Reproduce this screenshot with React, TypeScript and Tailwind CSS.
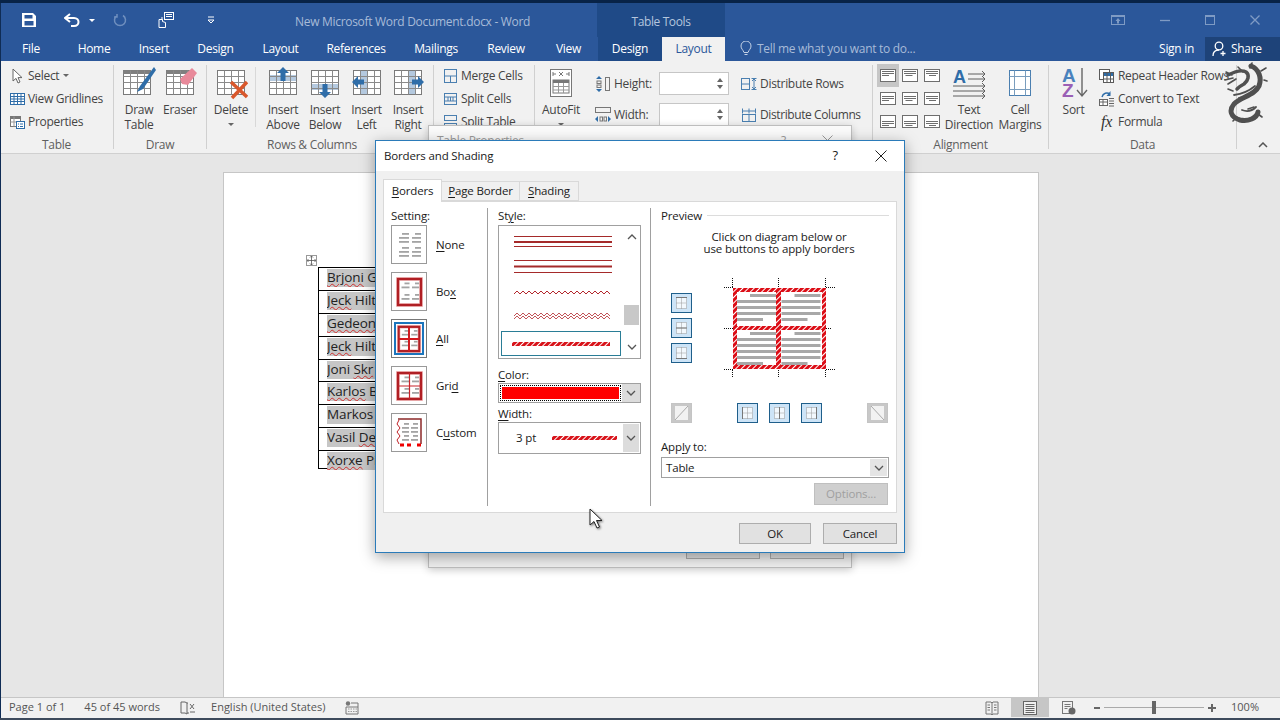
import React from 'react';

const ribbonBlue = '#2f6da8';

function TableGlyph({ band, header }: { band?: React.ReactNode; header?: boolean }) {
  return (
    <>
      <rect x="1.5" y="4.5" width="27" height="24" fill="#fff" stroke="#7a7a7a" />
      {band}
      {header && <rect x="1" y="4" width="28" height="4" fill="#7f7f7f" />}
      <path d="M1.5 10.5h27M1.5 16.5h27M1.5 22.5h27M8.5 4.5v24M15.5 4.5v24M22.5 4.5v24" stroke="#8a8a8a" fill="none" />
    </>
  );
}

function Big({ children, shift }: { children: React.ReactNode; shift?: boolean }) {
  return (
    <svg width="34" height="34" viewBox={shift ? '-2 0 34 34' : '0 0 34 34'} className="block">
      {children}
    </svg>
  );
}

function DrawTableIcon() {
  return (
    <Big>
      <TableGlyph header />
      <path d="M32 1 18 20l-3 6 6-3L34 4z" fill={ribbonBlue} />
    </Big>
  );
}

function EraserIcon() {
  return (
    <Big shift>
      <TableGlyph header />
      <path d="M27 2l5 5-9 12-6-1-2-5z" fill="#e8899a" />
    </Big>
  );
}

function DeleteIcon() {
  return (
    <Big shift>
      <TableGlyph />
      <path d="M15 16l16 15M31 16 16 32" stroke="#d9572b" strokeWidth="3.4" fill="none" />
    </Big>
  );
}

function InsertAboveIcon() {
  return (
    <Big shift>
      <TableGlyph band={<rect x="2" y="9" width="26" height="6" fill="#b4c9df" />} />
      <path d="M15 1l6 6h-3.500v8h-5V7H9z" fill={ribbonBlue} />
    </Big>
  );
}

function InsertBelowIcon() {
  return (
    <Big shift>
      <TableGlyph band={<rect x="2" y="18" width="26" height="6" fill="#b4c9df" />} />
      <path d="M15 32l6-6h-3.500v-8h-5v8H9z" fill={ribbonBlue} />
    </Big>
  );
}

function InsertLeftIcon() {
  return (
    <Big shift>
      <TableGlyph band={<rect x="9" y="5" width="7" height="23" fill="#b4c9df" />} />
      <path d="M0 16l6-6v3.500h6v5H6V22z" fill={ribbonBlue} />
    </Big>
  );
}

function InsertRightIcon() {
  return (
    <Big shift>
      <TableGlyph band={<rect x="15" y="5" width="7" height="23" fill="#b4c9df" />} />
      <path d="M31 16l-6-6v3.500h-6v5h6V22z" fill={ribbonBlue} />
    </Big>
  );
}

function Small({ children, w = 16 }: { children: React.ReactNode; w?: number }) {
  return (
    <svg width={w} height="16" viewBox={`0 0 ${w} 16`} className="block shrink-0">
      {children}
    </svg>
  );
}

const smallIcons: Record<string, React.ReactNode> = {
  select: (
    <path d="M4 1v12l3-2.600L9 15l2-1-2-4.400h4z" fill="#fff" stroke="#666" strokeWidth="1" />
  ),
  gridlines: (
    <g fill="none" stroke={ribbonBlue}>
      <rect x="1.500" y="2.500" width="14" height="11" fill="#fff" />
      <path d="M1.500 5.500h14M1.500 8h14M1.500 10.500h14M5 2.500v11M8.500 2.500v11M12 2.500v11" />
    </g>
  ),
  properties: (
    <g fill="none">
      <rect x="1.500" y="2.500" width="10" height="10" stroke="#777" fill="#fff" />
      <rect x="1" y="2" width="11" height="3" fill="#777" />
      <path d="M5 2.500v10M1.500 8h10" stroke="#999" />
      <rect x="7.500" y="7.500" width="8" height="7" stroke={ribbonBlue} fill="#fff" />
      <path d="M9 10h1M9 12.500h1M11 10h3M11 12.500h3" stroke={ribbonBlue} />
    </g>
  ),
  merge: (
    <g fill="none" stroke="#4a7fb0">
      <rect x="2.500" y="1.500" width="12" height="13" />
      <path d="M2.500 8h12M8.500 8v6.500" />
    </g>
  ),
  split: (
    <g fill="none" stroke="#4a7fb0">
      <rect x="2.500" y="2.500" width="12" height="11" />
      <path d="M2.500 6h12M6 6v4M8.500 6v4M11 6v4M2.500 10h12" />
    </g>
  ),
  splitTable: (
    <g fill="none" stroke="#4a7fb0">
      <rect x="2.500" y="1.500" width="12" height="5" />
      <rect x="2.500" y="9.500" width="12" height="5" />
    </g>
  ),
  repeat: (
    <g fill="none" stroke="#5a5a5a">
      <rect x="1.500" y="1.500" width="10" height="10" fill="#fff" />
      <rect x="5.500" y="4.500" width="10" height="10" fill="#fff" />
      <rect x="6" y="5" width="9" height="3" fill={ribbonBlue} stroke="none" />
      <path d="M9 5v9M12.500 5v9M5.500 11h10" />
    </g>
  ),
  convert: (
    <g fill="none">
      <rect x="1.500" y="8.500" width="8" height="6" stroke="#666" fill="#fff" />
      <path d="M1.500 11h8M5 8.500v6" stroke="#666" />
      <path d="M4 6c1-4 5-5 8-3" stroke={ribbonBlue} strokeWidth="1.400" />
      <path d="M12.500 0v5h-4z" fill={ribbonBlue} />
      <path d="M11 7.500h5M11 10h5M11 12.500h5M11 15h5" stroke="#666" />
    </g>
  ),
};

function SmallRow({ icon, label, caret }: { icon: React.ReactNode; label: string; caret?: boolean }) {
  return (
    <div className="flex h-[23px] items-center gap-[3px] whitespace-nowrap">
      {icon}
      <span>{label}</span>
      {caret && <span className="ml-[1px] h-0 w-0 border-x-[3px] border-t-[3px] border-x-transparent border-t-[#666]" />}
    </div>
  );
}

function BigButton({ icon, lines, className, caret }: { icon: React.ReactNode; lines: string[]; className: string; caret?: boolean }) {
  return (
    <div className={`flex shrink-0 flex-col items-center ${className}`}>
      <div className="flex h-[38px] items-center justify-center">{icon}</div>
      <div className="flex flex-col items-center whitespace-nowrap leading-[15px]">
        {lines.map((l) => (
          <span key={l}>{l}</span>
        ))}
      </div>
      {caret && <span className="mt-[6px] h-0 w-0 border-x-[3px] border-t-[3px] border-x-transparent border-t-[#666]" />}
    </div>
  );
}

function Group({ label, className, labelClass = '', children }: { label?: string; className: string; labelClass?: string; children: React.ReactNode }) {
  return (
    <div className={`flex h-full shrink-0 flex-col ${className}`}>
      <div className="flex h-[75px] flex-1 pt-[3px]">{children}</div>
      <div className={`mb-[1px] flex h-[14px] items-center justify-center text-[#5f5f5f] ${labelClass}`}>{label}</div>
    </div>
  );
}

function Sep() {
  return <div className="my-[4px] w-px shrink-0 bg-[#d0d0d0]" />;
}

function AlignCell({ row, col, active }: { row: number; col: number; active?: boolean }) {
  const ys = [2.500, 4.500, 6.500][row];
  const x = [2, 3.500, 5][col];
  return (
    <div className={`flex h-[23px] w-[22px] items-center justify-center ${active ? 'bg-[#c6c6c6]' : ''}`}>
      <svg width="16" height="13" viewBox="0 0 16 13">
        <rect x="0.500" y="0.500" width="15" height="12" fill="#fff" stroke="#6e6e6e" />
        <path d={`M2 ${ys}h12M2 ${ys + 2}h12M${x} ${ys + 4}h${7}`} stroke="#6e6e6e" fill="none" />
      </svg>
    </div>
  );
}

function Spin({ label, icon }: { label: string; icon: React.ReactNode }) {
  return (
    <div className="flex h-[31px] items-center">
      <div className="w-[18px] shrink-0">{icon}</div>
      <span className="w-[46px] shrink-0 pl-[1px]">{label}</span>
      <div className="relative h-[23px] w-[70px] shrink-0 border border-[#c6c6c6] bg-white">
        <span className="absolute right-[5px] top-[5px] h-0 w-0 border-x-[3px] border-b-[4px] border-x-transparent border-b-[#666]" />
        <span className="absolute bottom-[5px] right-[5px] h-0 w-0 border-x-[3px] border-t-[4px] border-x-transparent border-t-[#666]" />
      </div>
    </div>
  );
}

function Ribbon() {
  const rows = [0, 1, 2];
  return (
    <div className="flex h-[92px] shrink-0 bg-[#f1f1f1] text-[12px] text-[#444]">
      <Group label="Table" className="w-[113px]">
        <div className="flex flex-col pl-[9px]">
          <SmallRow caret label="Select" icon={<Small>{smallIcons.select}</Small>} />
          <SmallRow label="View Gridlines" icon={<Small>{smallIcons.gridlines}</Small>} />
          <SmallRow label="Properties" icon={<Small>{smallIcons.properties}</Small>} />
        </div>
      </Group>
      <Sep />
      <Group label="Draw" className="w-[92px]">
        <BigButton className="ml-[5px] w-[40px]" icon={<DrawTableIcon />} lines={['Draw', 'Table']} />
        <BigButton className="w-[42px]" icon={<EraserIcon />} lines={['Eraser']} />
      </Group>
      <Sep />
      <Group label="Rows & Columns" labelClass="pr-[16px]" className="w-[226px]">
        <BigButton className="w-[48px]" icon={<DeleteIcon />} lines={['Delete']} caret />
        <div className="mt-[3px] h-[60px] w-px bg-[#d8d8d8]" />
        <div className="ml-[6px] flex">
          <BigButton className="w-[42px]" icon={<InsertAboveIcon />} lines={['Insert', 'Above']} />
          <BigButton className="w-[42px]" icon={<InsertBelowIcon />} lines={['Insert', 'Below']} />
          <BigButton className="w-[41px]" icon={<InsertLeftIcon />} lines={['Insert', 'Left']} />
          <BigButton className="w-[42px]" icon={<InsertRightIcon />} lines={['Insert', 'Right']} />
        </div>
      </Group>
      <Sep />
      <Group className="w-[100px]">
        <div className="flex flex-col pl-[8px]">
          <SmallRow label="Merge Cells" icon={<Small>{smallIcons.merge}</Small>} />
          <SmallRow label="Split Cells" icon={<Small>{smallIcons.split}</Small>} />
          <SmallRow label="Split Table" icon={<Small>{smallIcons.splitTable}</Small>} />
        </div>
      </Group>
      <Sep />
      <Group className="w-[337px]">
        <BigButton
          className="w-[52px]"
          caret
          icon={
            <svg width="24" height="30" viewBox="0 0 24 30">
              <rect x="1.500" y="1.500" width="21" height="27" fill="#fff" stroke="#777" />
              <path d="M4 6h3M17 6h3M10 4l4 4M14 4l-4 4M4 4v4M20 4v4" stroke="#777" fill="none" />
              <rect x="4" y="12" width="16" height="13" fill="#fff" stroke="#777" />
              <rect x="4" y="12" width="16" height="3" fill="#777" />
              <path d="M4 18.500h16M4 22h16M9.500 15v10M14.500 15v10" stroke="#999" />
            </svg>
          }
          lines={['AutoFit']}
        />
        <div className="ml-[8px] flex w-[134px] flex-col pt-[4px]">
          <Spin
            label="Height:"
            icon={
              <Small>
                <path d="M4 0l3 3H1zM4 16l3-3H1z" fill={ribbonBlue} />
                <rect x="2" y="5" width="4" height="2.500" fill="none" stroke="#777" />
                <rect x="2" y="9" width="4" height="2.500" fill="none" stroke="#777" />
                <rect x="10.500" y="1.500" width="4" height="13" fill="none" stroke="#777" />
              </Small>
            }
          />
          <Spin
            label="Width:"
            icon={
              <Small>
                <rect x="0.500" y="0.500" width="15" height="5" fill="none" stroke="#777" />
                <path d="M0 12l3-3v6zM16 12l-3-3v6z" fill={ribbonBlue} />
                <rect x="5" y="10" width="2.500" height="4" fill="none" stroke="#777" />
                <rect x="9" y="10" width="2.500" height="4" fill="none" stroke="#777" />
              </Small>
            }
          />
        </div>
        <div className="ml-[12px] flex flex-col pt-[4px]">
          <div className="flex h-[31px] items-center gap-[3px] whitespace-nowrap">
            <Small>
              <g fill="none" stroke="#4a7fb0">
                <rect x="0.500" y="2.500" width="8" height="11" />
                <path d="M0.500 8h8M13 2v12M10.500 2.500h5M10.500 13.500h5M11 5l2-2 2 2M11 11l2 2 2-2" />
              </g>
            </Small>
            <span>Distribute Rows</span>
          </div>
          <div className="flex h-[31px] items-center gap-[3px] whitespace-nowrap">
            <Small>
              <g fill="none" stroke="#4a7fb0">
                <rect x="1.500" y="7.500" width="13" height="7" />
                <path d="M8 7.500v7M1.500 4h13M1.500 1.500v5M8 1.500v5M14.500 1.500v5" />
              </g>
            </Small>
            <span className="tracking-[-0.4px]">Distribute Columns</span>
          </div>
        </div>
      </Group>
      <Sep />
      <Group label="Alignment" className="w-[175px]">
        <div className="ml-[4px] flex h-fit flex-col">
          {rows.map((r) => (
            <div key={r} className="flex">
              {rows.map((c) => (
                <AlignCell key={c} row={r} col={c} active={r === 0 && c === 0} />
              ))}
            </div>
          ))}
        </div>
        <BigButton
          className="w-[52px]"
          icon={
            <svg width="34" height="32" viewBox="0 0 34 32">
              <text x="1" y="16" fontSize="18" fontWeight="700" fill={ribbonBlue} fontFamily="Liberation Sans, sans-serif">A</text>
              <path d="M16 7h17M16 12h17M1 19h32M1 24h32M1 29h32M30 4l3 3-3 3M30 9l3 3-3 3M30 16l3 3-3 3M30 21l3 3-3 3M30 26l3 3-3 3" fill="none" stroke="#5e5e5e" />
            </svg>
          }
          lines={['Text', 'Direction']}
        />
        <BigButton
          className="w-[50px]"
          icon={
            <svg width="24" height="30" viewBox="0 0 24 30">
              <rect x="1.500" y="2.500" width="21" height="25" fill="#fff" stroke="#4a7fb0" />
              <path d="M6.500 2.500v25M17.500 2.500v25M1.500 8.500h21M1.500 21.500h21" fill="none" stroke="#7a9dbd" />
            </svg>
          }
          lines={['Cell', 'Margins']}
        />
      </Group>
      <Sep />
      <Group label="Data" className="w-[187px]">
        <BigButton
          className="w-[49px]"
          icon={
            <svg width="30" height="34" viewBox="0 0 30 34">
              <text x="3" y="16" fontSize="19" fontWeight="700" fill="#4a82bd" fontFamily="Liberation Sans, sans-serif">A</text>
              <text x="3" y="31" fontSize="19" fontWeight="700" fill="#9a5fb5" fontFamily="Liberation Sans, sans-serif">Z</text>
              <path d="M23 2v28M18 24l5 6 5-6" fill="none" stroke="#666" strokeWidth="1.400" />
            </svg>
          }
          lines={['Sort']}
        />
        <div className="flex flex-col">
          <SmallRow label="Repeat Header Rows" icon={<Small w={17}>{smallIcons.repeat}</Small>} />
          <SmallRow label="Convert to Text" icon={<Small w={17}>{smallIcons.convert}</Small>} />
          <div className="flex h-[23px] items-center gap-[3px]">
            <span className="w-[17px] text-center font-['Liberation_Serif',serif] text-[16px] italic leading-none text-[#333]">fx</span>
            <span>Formula</span>
          </div>
        </div>
      </Group>
      <Sep />
      <div className="flex flex-1 items-end justify-end pb-[5px] pr-[12px]">
        <svg width="10" height="6" viewBox="0 0 10 6">
          <path d="M1 5l4-4 4 4" fill="none" stroke="#555" strokeWidth="1.500" />
        </svg>
      </div>
    </div>
  );
}

const tabs = [
  ['Home', 'w-[62px]'],
  ['Insert', 'w-[58px]'],
  ['Design', 'w-[65px]'],
  ['Layout', 'w-[65px]'],
  ['References', 'w-[86px]'],
  ['Mailings', 'w-[74px]'],
  ['Review', 'w-[66px]'],
  ['View', 'w-[59px]'],
];

function TitleBar() {
  return (
    <div className="relative flex h-[34px] shrink-0 items-center bg-[#2b579a]">
      <svg width="16" height="16" viewBox="0 0 16 16" className="ml-[21px]">
        <path d="M1 1h11l3 3v11H1z" fill="#fff" />
        <rect x="3.500" y="3" width="8" height="3.500" fill="#2b579a" />
        <rect x="3.500" y="9" width="9" height="4.500" fill="#2b579a" />
      </svg>
      <svg width="16" height="14" viewBox="0 0 16 14" className="ml-[27px]">
        <path d="M6 1 1 5l5 4" fill="none" stroke="#fff" strokeWidth="2" />
        <path d="M2 5h8c6 0 6 8 0 8H7" fill="none" stroke="#fff" strokeWidth="2" />
      </svg>
      <span className="ml-[9px] h-0 w-0 border-x-[3px] border-t-[3px] border-x-transparent border-t-white" />
      <svg width="14" height="14" viewBox="0 0 14 14" className="ml-[18px]">
        <path d="M4 2.500a5.500 5.500 0 1 0 6 0M4 1v3H1" fill="none" stroke="#6f8fbe" strokeWidth="1.500" />
      </svg>
      <svg width="18" height="18" viewBox="0 0 18 18" className="ml-[30px]">
        <rect x="7.500" y="1.500" width="9" height="7" fill="none" stroke="#fff" />
        <path d="M9 3.500h6M9 5.500h6" stroke="#fff" />
        <path d="M5 6v3M2 8.500h3.500v2l3 1v5H2z" fill="none" stroke="#fff" />
      </svg>
      <svg width="8" height="8" viewBox="0 0 8 8" className="ml-[32px]">
        <path d="M1 1h6M1 4h6l-3 3z" fill="none" stroke="#fff" />
      </svg>
      <span className="absolute left-[295px] top-[11px] whitespace-nowrap text-[12px] leading-[16px] text-[#a8bbd8]">
        New Microsoft Word Document.docx - Word
      </span>
      <div className="absolute left-[597px] top-0 flex h-[34px] w-[128px] items-center justify-center bg-[#1f4a87] pt-[4px] text-[12px] tracking-[-0.4px] text-[#b5c6de]">
        Table Tools
      </div>
      <div className="ml-auto mr-[20px] flex items-center gap-[35px]">
        <svg width="14" height="10" viewBox="0 0 14 10">
          <rect x="0.500" y="0.500" width="13" height="9" fill="none" stroke="#7f9bc4" />
          <rect x="0" y="0" width="14" height="2" fill="#7f9bc4" />
          <path d="M7 3l2.500 3H8v2.500H6V6H4.500z" fill="#7f9bc4" />
        </svg>
        <svg width="10" height="10" viewBox="0 0 10 10">
          <path d="M0 5.500h10" stroke="#7f9bc4" strokeWidth="1.300" />
        </svg>
        <svg width="10" height="10" viewBox="0 0 10 10">
          <rect x="0.500" y="0.500" width="9" height="9" fill="none" stroke="#7f9bc4" />
          <rect x="0" y="0" width="10" height="2" fill="#7f9bc4" />
        </svg>
        <svg width="10" height="10" viewBox="0 0 10 10">
          <path d="M0.500 0.500l9 9M9.500 0.500l-9 9" stroke="#7f9bc4" strokeWidth="1.300" />
        </svg>
      </div>
    </div>
  );
}

function TabRow() {
  return (
    <div className="flex h-[24px] shrink-0 items-center bg-[#2b579a] text-[12px] text-white">
      <div className="w-[63px] pr-[1px] text-center">File</div>
      {tabs.map(([t, w]) => (
        <div key={t} className={`${w} text-center`}>
          {t}
        </div>
      ))}
      <div className="flex h-full w-[64px] items-center justify-center bg-[#1f4a87]">Design</div>
      <div className="flex h-full w-[63px] items-center justify-center bg-[#f1f1f1] text-[#2b579a]">Layout</div>
      <svg width="12" height="16" viewBox="0 0 12 16" className="ml-[15px]">
        <path d="M4 11.500C3 8.500 1 8 1 5a5 5 0 0 1 10 0c0 3-2 3.500-3 6.500zM4.500 13.500h3" fill="none" stroke="#c4d2e6" />
      </svg>
      <span className="ml-[5px] whitespace-nowrap text-[#a8bbd8]">Tell me what you want to do...</span>
      <span className="ml-auto mr-[11px]">Sign in</span>
      <div className="flex h-full w-[75px] items-center gap-[3px] bg-[#1e4379] pl-[7px]">
        <svg width="16" height="16" viewBox="0 0 16 16">
          <circle cx="7" cy="5" r="3.800" fill="none" stroke="#fff" strokeWidth="1.300" />
          <path d="M1 15c0-4 2.500-6 6-6M11 10v5M8.500 12.500h5" fill="none" stroke="#fff" strokeWidth="1.300" />
        </svg>
        <span>Share</span>
      </div>
    </div>
  );
}

const names = [
  { a: 'Brjoni', b: ' G', w: 'a', h: 'h-[23px]' },
  { a: 'Jeck', b: ' Hilt', w: 'a', h: 'h-[23px]' },
  { a: 'Gedeon', b: '', w: 'a', h: 'h-[23px]' },
  { a: 'Jeck', b: ' Hilt', w: 'a', h: 'h-[23px]' },
  { a: 'Joni ', b: 'Skr', w: 'b', h: 'h-[22px]' },
  { a: 'Karlos', b: ' B', w: 'a', h: 'h-[23px]' },
  { a: 'Markos', b: '', w: '', h: 'h-[23px]' },
  { a: 'Vasil ', b: 'De', w: 'b', h: 'h-[23px]' },
  { a: 'Xorxe', b: ' Pi', w: 'a', h: 'h-[18px]' },
];

function Wavy({ on, children }: { on: boolean; children: string }) {
  return <span className={on ? 'underline decoration-[#d03030] decoration-wavy decoration-1' : ''}>{children}</span>;
}

function DocArea() {
  return (
    <div className="flex min-h-0 flex-1 border-t border-[#d0d0d0] bg-[#e6e6e6] pt-[18px]">
      <div className="ml-[223px] w-[816px] border-x border-t border-[#c6c6c6] bg-white pl-[94px] pt-[94px]">
        <div className="relative w-[120px] border-x border-t border-black">
          <div className="absolute -left-[13px] -top-[13px] flex h-[11px] w-[11px] items-center justify-center border border-[#999] bg-white">
            <svg width="9" height="9" viewBox="0 0 9 9">
              <path d="M4.500 0v9M0 4.500h9M3 1.500l1.500-1.500L6 1.500M3 7.500L4.500 9 6 7.500M1.500 3L0 4.500 1.500 6M7.500 3 9 4.500 7.500 6" fill="none" stroke="#555" strokeWidth="0.800" />
            </svg>
          </div>
          {names.map((n, i) => (
            <div key={i} className={`${n.h} flex items-start border-b border-black pl-[8px] pt-[1px]`}>
              <div className="h-[18px] w-full overflow-hidden whitespace-pre bg-[#c6c6c6] text-[13.500px] leading-[16px] tracking-[-0.1px] text-[#222]">
                <Wavy on={n.w === 'a'}>{n.a}</Wavy>
                <Wavy on={n.w === 'b'}>{n.b}</Wavy>
              </div>
            </div>
          ))}
        </div>
      </div>
    </div>
  );
}

function StatusBar() {
  return (
    <div className="flex h-[21px] shrink-0 items-center border-t border-[#c6c6c6] bg-[#f1f1f1] pb-px text-[11px] tracking-normal text-[#555]">
      <span className="ml-[9px] whitespace-nowrap">Page 1 of 1</span>
      <span className="ml-[19px] whitespace-nowrap">45 of 45 words</span>
      <svg width="16" height="14" viewBox="0 0 16 14" className="ml-[20px]">
        <path d="M5 1H1v11h4l2 1V2zM7 2h1M9 12H7" fill="none" stroke="#666" />
        <path d="M10 3l4 5M14 3l-4 5M10 11h5" fill="none" stroke="#666" />
      </svg>
      <span className="ml-[15px] whitespace-nowrap">English (United States)</span>
      <svg width="14" height="14" viewBox="0 0 14 14" className="ml-[20px]">
        <circle cx="3" cy="2.500" r="2.200" fill="#777" />
        <path d="M6 2h7v11H1V6h12" fill="none" stroke="#777" />
        <path d="M3 8h9M3 10.500h9" stroke="#999" strokeDasharray="1.500 1" />
      </svg>
      <svg width="14" height="14" viewBox="0 0 14 14" className="ml-auto">
        <path d="M1 1h5l1 1 1-1h5v12H8l-1 1-1-1H1zM7 2v11M2.500 4H5M2.500 6.500H5M2.500 9H5M9 4h2.500M9 6.500h2.500M9 9h2.500" fill="none" stroke="#777" />
      </svg>
      <div className="ml-[12px] flex h-full w-[38px] items-center justify-center bg-[#c6c6c6]">
        <svg width="14" height="14" viewBox="0 0 14 14">
          <rect x="0.500" y="0.500" width="13" height="13" fill="#f0f0f0" stroke="#666" />
          <path d="M2.500 3.500h9M2.500 5.500h9M2.500 7.500h9M2.500 9.500h9M2.500 11.500h9" stroke="#666" />
        </svg>
      </div>
      <svg width="14" height="14" viewBox="0 0 14 14" className="ml-[13px]">
        <rect x="0.500" y="0.500" width="10" height="12" fill="none" stroke="#777" />
        <path d="M2.500 3.500h6M2.500 5.500h6M2.500 7.500h3" stroke="#777" />
        <circle cx="10" cy="10" r="3.500" fill="#666" />
      </svg>
      <span className="ml-[18px] h-[2px] w-[6px] bg-[#666]" />
      <div className="relative ml-[4px] h-px w-[100px] bg-[#aaa]">
        <span className="absolute -top-[6px] left-[48px] h-[13px] w-[4px] bg-[#666]" />
      </div>
      <span className="relative ml-[4px] h-[8px] w-[8px]">
        <span className="absolute left-0 top-[3px] h-[2px] w-[8px] bg-[#666]" />
        <span className="absolute left-[3px] top-0 h-[8px] w-[2px] bg-[#666]" />
      </span>
      <span className="ml-[15px] mr-[21px]">100%</span>
    </div>
  );
}

function Chevron({ className = '' }: { className?: string }) {
  return (
    <svg width="10" height="6" viewBox="0 0 10 6" className={className}>
      <path d="M1 1l4 4 4-4" fill="none" stroke="#555" strokeWidth="1.300" />
    </svg>
  );
}

function Dashes({ x, y, n, w, dx = 0 }: { x: number; y: number; n: number; w: number; dx?: number }) {
  return (
    <>
      {Array.from({ length: n }).map((_, i) => (
        <rect key={i} x={x + (i === 0 ? dx : 0)} y={y + i * 4} width={w - (i === 0 ? dx : 0)} height="1.800" fill="#a4a4a4" />
      ))}
    </>
  );
}

function TileDashes({ inset }: { inset?: boolean }) {
  const a = inset ? 9.500 : 7;
  const w = inset ? 8 : 10;
  return (
    <>
      <Dashes x={a} y={inset ? 9.500 : 7} n={inset ? 2 : 3} w={w} dx={3} />
      <Dashes x={20} y={inset ? 9.500 : 7} n={inset ? 2 : 3} w={w - 1} dx={3} />
      <Dashes x={a} y={21} n={inset ? 2 : 3} w={w} dx={3} />
      <Dashes x={20} y={21} n={inset ? 2 : 3} w={w - 1} dx={3} />
    </>
  );
}

function Tile({ children, active }: { children: React.ReactNode; active?: boolean }) {
  return (
    <div className={`h-[39px] w-[36px] shrink-0 border bg-white ${active ? 'border-[#777] p-[2px]' : 'border-[#999]'}`}>
      <div className={`h-full w-full ${active ? 'border-2 border-[#1c75bc]' : ''}`}>
        <svg viewBox={active ? '3 3 29 31' : '0 0 34 37'} width="100%" height="100%" preserveAspectRatio="none" className="block">
          {children}
        </svg>
      </div>
    </div>
  );
}

const boxFrame = (
  <>
    <rect x="6" y="6" width="23" height="26" fill="none" stroke="#f6c6c6" strokeWidth="4" />
    <rect x="6" y="6" width="23" height="26" fill="none" stroke="#b01f24" strokeWidth="2.400" />
  </>
);

const settings: { pre: string; u: string; post: string; tile: React.ReactNode; active?: boolean }[] = [
  { pre: '', u: 'N', post: 'one', tile: <TileDashes /> },
  {
    pre: 'Bo',
    u: 'x',
    post: '',
    tile: (
      <>
        {boxFrame}
        <TileDashes inset />
      </>
    ),
  },
  {
    pre: '',
    u: 'A',
    post: 'll',
    active: true,
    tile: (
      <>
        {boxFrame}
        <TileDashes inset />
        <path d="M17.500 6v26M6 19h23" stroke="#d11a1f" strokeWidth="2.200" />
      </>
    ),
  },
  {
    pre: 'Gri',
    u: 'd',
    post: '',
    tile: (
      <>
        {boxFrame}
        <TileDashes inset />
        <path d="M17.500 6v26M6 19h23" stroke="#c8232a" strokeWidth="1.200" />
      </>
    ),
  },
  {
    pre: 'C',
    u: 'u',
    post: 'stom',
    tile: (
      <>
        <Dashes x={10} y={9} n={3} w={7} dx={2} />
        <Dashes x={19} y={9} n={3} w={7} dx={2} />
        <Dashes x={10} y={21} n={2} w={7} dx={2} />
        <Dashes x={19} y={21} n={2} w={7} dx={2} />
        <path d="M6 5h23v25" fill="none" stroke="#8c2a2a" strokeWidth="1.500" />
        <path d="M7 6l-2 4 3 4-3 4 3 4-3 4 2 4" fill="none" stroke="#c02025" />
        <path d="M8 31h4M15 31h4M25 31h4" stroke="#ee0000" strokeWidth="3" />
      </>
    ),
  },
];

function HatchBar({ w, h = 4 }: { w: number; h?: number }) {
  const id = `hatch-${w}`;
  return (
    <svg width={w} height={h} viewBox={`0 0 ${w} ${h}`} className="block">
      <defs>
        <pattern id={id} width="4" height="4" patternUnits="userSpaceOnUse" patternTransform="rotate(45)">
          <rect width="4" height="4" fill="#d8131a" />
          <rect width="1" height="4" fill="#fff" />
        </pattern>
      </defs>
      <rect width={w} height={h} fill={`url(#${id})`} />
    </svg>
  );
}

function Mark({ u, pre = '', post = '' }: { u: string; pre?: string; post?: string }) {
  return (
    <span>
      {pre}
      <span className="underline underline-offset-2">{u}</span>
      {post}
    </span>
  );
}

function PreviewBtn({ d, disabled }: { d: string; disabled?: boolean }) {
  return (
    <div className={`h-[20px] w-[21px] border ${disabled ? 'border-[#c4c4c4] bg-[#c8c8c8]' : 'border-[#1f5f8b] bg-[#cde4f7]'}`}>
      <svg width="19" height="18" viewBox="0 0 19 18" className="block">
        {disabled ? (
          <>
            <rect x="3" y="2" width="13" height="14" fill="#f2f2f2" />
            <path d={d} stroke="#aaa" fill="none" />
          </>
        ) : (
          <>
            <rect x="4.500" y="3.500" width="10" height="11" fill="#f2f8fd" stroke="#999" strokeDasharray="1 1" />
            <path d="M9.500 3.500v11M4.500 9h10" stroke="#999" strokeDasharray="1 1" fill="none" />
            <path d={d} stroke="#777" fill="none" />
          </>
        )}
      </svg>
    </div>
  );
}

function PreviewDiagram() {
  const fullL = [0, 1, 2];
  return (
    <svg width="111" height="100" viewBox="0 0 111 100" className="ml-[32px] block shrink-0">
      <defs>
        <pattern id="preview-hatch" width="4" height="4" patternUnits="userSpaceOnUse" patternTransform="rotate(45)">
          <rect width="4" height="4" fill="#dc0d16" />
          <rect width="1" height="4" fill="#fff" />
        </pattern>
      </defs>
      <g fill="#a8a8a8">
        {[13, 57.500].map((x) => (
          <g key={x}>
            {[16, 54].map((y) => (
              <g key={y}>
                <rect x={x + 13} y={y} width="26" height="3" />
                {fullL.map((i) => (
                  <rect key={i} x={x} y={y + 6 + i * 6} width="39" height="3" />
                ))}
                {y === 54 && <rect x={x} y={y + 24} width="39" height="3" />}
                <rect x={x} y={y + (y === 54 ? 30 : 24)} width="26" height="3" />
              </g>
            ))}
          </g>
        ))}
      </g>
      <g stroke="#111" strokeDasharray="1 1" fill="none">
        <path d="M0 9.500h9M102 9.500h9M0 50.500h9M102 50.500h6M0 91.500h9M102 91.500h9M8.500 0v9M54.500 0v9M101.500 0v9M8.500 92v8M54.500 92v8M101.500 92v8" />
      </g>
      <path d="M9 10h93v81H9zM13 14v73h39V14zM57 14v73h41V14z" fill="url(#preview-hatch)" fillRule="evenodd" />
      <rect x="52" y="14" width="5" height="73" fill="url(#preview-hatch)" />
      <rect x="13" y="48" width="85" height="4" fill="url(#preview-hatch)" />
    </svg>
  );
}

function BackDialog() {
  return (
    <div className="absolute left-[428px] top-[122px] flex h-[443px] w-[424px] flex-col border border-[#bdbdbd] bg-[#f0f0f0] shadow-[0_2px_8px_rgba(0,0,0,0.2)]">
      <div className="relative flex h-[30px] items-center bg-[#fafafa] pl-[8px] text-[12px] text-[#9a9a9a]">
        <span>Table Properties</span>
        <span className="absolute left-[352px] top-[6px]">?</span>
        <svg width="11" height="11" viewBox="0 0 11 11" className="absolute left-[393px] top-[9px]">
          <path d="M0.500 0.500l10 10M10.500 0.500l-10 10" stroke="#999" />
        </svg>
      </div>
      <div className="mt-auto flex justify-end gap-[10px] pb-[8px] pr-[7px]">
        <div className="h-[22px] w-[74px] border border-[#adadad] bg-[#e1e1e1]" />
        <div className="h-[22px] w-[74px] border border-[#adadad] bg-[#e1e1e1]" />
      </div>
    </div>
  );
}

function Dialog() {
  return (
    <div className="absolute left-[375px] top-[137px] flex h-[413px] w-[530px] flex-col border border-[#2b7bb9] bg-[#f0f0f0] text-[11.500px] tracking-[-0.15px] text-[#1a1a1a] shadow-[0_4px_14px_rgba(0,0,0,0.35)]">
      <div className="flex h-[30px] shrink-0 items-center bg-white pl-[8px]">
        <span>Borders and Shading</span>
        <span className="ml-auto mr-[37px] text-[13px]">?</span>
        <svg width="12" height="12" viewBox="0 0 12 12" className="mr-[17px]">
          <path d="M0.500 0.500l11 11M11.500 0.500l-11 11" stroke="#222" />
        </svg>
      </div>
      <div className="flex h-[30px] shrink-0 items-end pl-[7px]">
        <div className="relative z-10 -mb-px flex h-[23px] w-[59px] items-center justify-center border border-b-0 border-[#d9d9d9] bg-white">
          <Mark u="B" post="orders" />
        </div>
        <div className="flex h-[20px] w-[78px] items-center justify-center border-y border-r border-[#d9d9d9]">
          <Mark u="P" post="age Border" />
        </div>
        <div className="flex h-[20px] w-[59px] items-center justify-center border-y border-r border-[#d9d9d9]">
          <Mark u="S" post="hading" />
        </div>
      </div>
      <div className="mx-[7px] flex h-[312px] shrink-0 border border-[#d9d9d9] bg-white pb-[6px] pl-[7px] pt-[6px]">
        <div className="flex w-[97px] shrink-0 flex-col border-r border-[#a0a0a0]">
          <div className="h-[17px] leading-[15px]">Setting:</div>
          <div className="flex flex-col gap-[8px]">
            {settings.map((s) => (
              <div key={s.pre + s.u} className="flex items-center gap-[9px]">
                <Tile active={s.active}>{s.tile}</Tile>
                <Mark pre={s.pre} u={s.u} post={s.post} />
              </div>
            ))}
          </div>
        </div>
        <div className="flex w-[163px] shrink-0 flex-col border-r border-[#a0a0a0] pl-[10px]">
          <div className="h-[17px] leading-[15px]">
            <Mark pre="St" u="y" post="le:" />
          </div>
          <div className="flex h-[134px] w-[143px] border border-[#a0a0a0] bg-white">
            <div className="flex w-[124px] flex-col pl-[2px]">
              <svg width="120" height="105" viewBox="0 0 120 105" className="block shrink-0">
                <g stroke="#a52a2a" fill="none">
                  <path d="M13 10.500h98M13 20.500h98M13 34.500h98M13 46.500h98" />
                  <path d="M13 16h98M13 40.500h98" strokeWidth="2" />
                </g>
                <path d="M13 68l3-3 3 3 3-3 3 3 3-3 3 3 3-3 3 3 3-3 3 3 3-3 3 3 3-3 3 3 3-3 3 3 3-3 3 3 3-3 3 3 3-3 3 3 3-3 3 3 3-3 3 3 3-3 3 3 3-3 3 3 3-3 3 3" fill="none" stroke="#b3282d" />
                <path d="M13 90l3-3 3 3 3-3 3 3 3-3 3 3 3-3 3 3 3-3 3 3 3-3 3 3 3-3 3 3 3-3 3 3 3-3 3 3 3-3 3 3 3-3 3 3 3-3 3 3 3-3 3 3 3-3 3 3 3-3 3 3 3-3 3 3M13 93l3-3 3 3 3-3 3 3 3-3 3 3 3-3 3 3 3-3 3 3 3-3 3 3 3-3 3 3 3-3 3 3 3-3 3 3 3-3 3 3 3-3 3 3 3-3 3 3 3-3 3 3 3-3 3 3 3-3 3 3 3-3 3 3" fill="none" stroke="#b3282d" strokeWidth="0.800" />
              </svg>
              <div className="flex h-[25px] w-[120px] shrink-0 items-center justify-center border border-[#2a7d96]">
                <HatchBar w={98} />
              </div>
            </div>
            <div className="flex w-[17px] flex-col items-center justify-between py-[8px]">
              <Chevron className="rotate-180" />
              <div className="mb-[14px] mt-[60px] h-[20px] w-[15px] bg-[#c8c8c8]" />
              <Chevron />
            </div>
          </div>
          <div className="mt-[7px] h-[17px] leading-[18px]">
            <Mark u="C" post="olor:" />
          </div>
          <div className="flex h-[20px] w-[143px] border border-[#a0a0a0] bg-white">
            <div className="m-px flex-1 border border-dotted border-black p-px">
              <div className="h-full bg-[#ff0000]" />
            </div>
            <div className="flex w-[18px] items-center justify-center bg-[#dcdcdc]">
              <Chevron />
            </div>
          </div>
          <div className="mt-[2px] h-[17px] leading-[18px]">
            <Mark u="W" post="idth:" />
          </div>
          <div className="flex h-[32px] w-[143px] border border-[#a0a0a0] bg-white">
            <span className="ml-[17px] self-center whitespace-nowrap">3 pt</span>
            <div className="ml-[16px] self-center">
              <HatchBar w={65} />
            </div>
            <div className="m-px ml-auto flex w-[16px] items-center justify-center bg-[#dcdcdc]">
              <Chevron />
            </div>
          </div>
        </div>
        <div className="flex w-[238px] shrink-0 flex-col pl-[10px]">
          <div className="flex h-[15px] items-center gap-[5px]">
            <span className="leading-[15px]">Preview</span>
            <div className="h-px w-[184px] bg-[#dcdcdc]" />
          </div>
          <div className="mt-[8px] w-[236px] text-center leading-[12px]">
            <div>Click on diagram below or</div>
            <div>use buttons to apply borders</div>
          </div>
          <div className="mt-[23px] flex">
            <div className="ml-[10px] flex flex-col gap-[5px] pt-[15px]">
              <PreviewBtn d="M4 3.500h11" />
              <PreviewBtn d="M4 9h11" />
              <PreviewBtn d="M4 14.500h11" />
            </div>
            <PreviewDiagram />
          </div>
          <div className="mt-[25px] flex">
            <div className="ml-[10px]">
              <PreviewBtn disabled d="M3 16 16 2" />
            </div>
            <div className="ml-[45px]">
              <PreviewBtn d="M4.500 3v12" />
            </div>
            <div className="ml-[11px]">
              <PreviewBtn d="M9.500 3v12" />
            </div>
            <div className="ml-[11px]">
              <PreviewBtn d="M14.500 3v12" />
            </div>
            <div className="ml-[45px]">
              <PreviewBtn disabled d="M3 2l13 14" />
            </div>
          </div>
          <div className="mt-[16px] h-[18px] leading-[16px]">
            <Mark pre="App" u="l" post="y to:" />
          </div>
          <div className="flex h-[21px] w-[228px] items-center border border-[#a0a0a0] bg-white pl-[4px]">
            <span>Table</span>
            <div className="m-px ml-auto flex h-[17px] w-[17px] items-center justify-center bg-[#e4e4e4]">
              <Chevron />
            </div>
          </div>
          <div className="ml-[153px] mt-[5px] flex h-[22px] w-[74px] items-center justify-center self-start border border-[#bfbfbf] bg-[#cfcfcf] text-[#a0a0a0]">
            Options...
          </div>
        </div>
      </div>
      <div className="mt-[10px] flex justify-end gap-[12px] pr-[7px]">
        <div className="flex h-[21px] w-[72px] items-center justify-center border border-[#adadad] bg-[#e1e1e1]">OK</div>
        <div className="flex h-[21px] w-[74px] items-center justify-center border border-[#adadad] bg-[#e1e1e1]">Cancel</div>
      </div>
    </div>
  );
}

export default function App() {
  return (
    <div className="relative flex h-[720px] w-[1280px] flex-col overflow-hidden border-y-[3px] border-b-[2px] border-t-[#082347] border-b-[#3d4a5c] bg-[#2b579a] font-['Open_Sans','Noto_Sans',sans-serif] tracking-[-0.3px]">
      <TitleBar />
      <TabRow />
      <Ribbon />
      <DocArea />
      <StatusBar />

      <div className="absolute inset-y-0 left-0 w-px bg-[#0f2c55]" />

      {/* watermark over the ribbon corner */}
      <svg width="46" height="62" viewBox="0 0 46 62" className="absolute left-[1224px] top-[59px]">
        <g fill="none" stroke="#505050" strokeLinecap="round">
          <path d="M27 4c8 3 11 12 8 20-4 9-18 11-25 18-5 6-4 13 6 16 8 2 17-2 18-8" strokeWidth="5" />
          <path d="M4 13c6-3 13-6 18-3 4 3 2 9-2 12-4 2-6 4-7 5" strokeWidth="3.500" />
          <path d="M10 33c8-1 15-4 21-9M15 36c7-1 14-4 18-9M18 48c5 2 10 1 14-3" strokeWidth="1.800" />
          <path d="M2 10l6 3M4 22l8-5M1 18l8-2M14 5l5 5M28 1l-2 5M37 9l5-3M40 18l3 1M9 29l-5-2M13 55l-4 4M34 52l4 3M24 47l6-2" strokeWidth="1.600" />
        </g>
      </svg>

      <BackDialog />
      <Dialog />

      {/* mouse pointer */}
      <svg width="16" height="22" viewBox="0 0 16 22" className="absolute left-[589px] top-[505px] drop-shadow-[1px_1px_1px_rgba(0,0,0,0.5)]">
        <path d="M1 1v16l4-3.500 3 6.500 2.500-1-3-6.500H13z" fill="#fff" stroke="#222" strokeWidth="1" />
      </svg>
    </div>
  );
}
